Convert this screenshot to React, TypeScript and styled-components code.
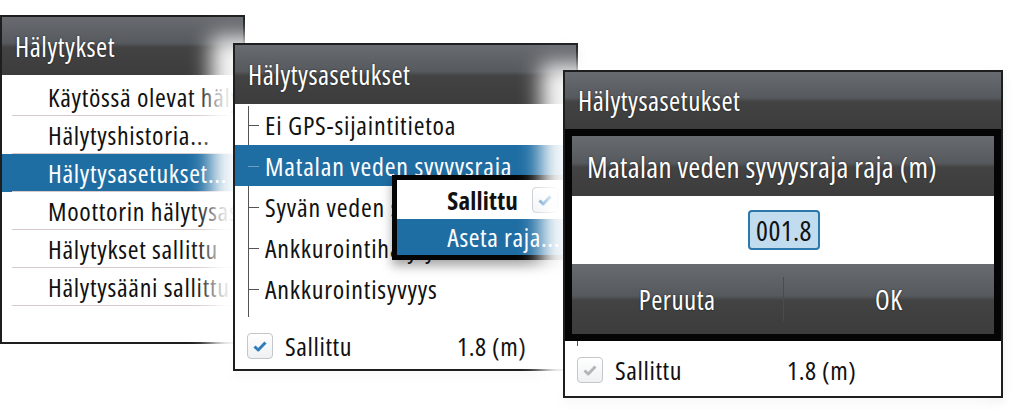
import React from 'react';
import styled, { createGlobalStyle, css } from 'styled-components';

const GlobalStyle = createGlobalStyle`
  html, body {
    margin: 0;
    padding: 0;
    background: #ffffff;
  }
  body {
    font-family: "Open Sans", "Noto Sans", "DejaVu Sans", sans-serif;
    font-stretch: 75%;
    color: #111;
  }
`;

const Desktop = styled.div`
  position: relative;
  width: 1023px;
  height: 420px;
  overflow: hidden;
  background: #ffffff;
`;

const Window = styled.div<{ $left: number; $top: number; $width: number; $height: number; $glow?: boolean }>`
  position: absolute;
  left: ${p => p.$left}px;
  top: ${p => p.$top}px;
  width: ${p => p.$width}px;
  height: ${p => p.$height}px;
  box-sizing: border-box;
  border: 2px solid #1e1e1e;
  background: #ffffff;
  display: flex;
  flex-direction: column;
  ${p => p.$glow && css`
    box-shadow: -16px 0 20px 6px rgba(255, 255, 255, 0.95), 0 4px 10px rgba(0, 0, 0, 0.08);
  `}
`;

const glossBar = css`
  background: linear-gradient(
    to bottom,
    #686b70 0%,
    #56595d 45%,
    #434343 52%,
    #3c3c3c 100%
  );
  color: #ffffff;
  text-shadow: 0 0 2px rgba(0, 0, 0, 0.6);
`;

const TitleBar = styled.div<{ $height: number }>`
  ${glossBar};
  height: ${p => p.$height}px;
  flex: none;
  display: flex;
  align-items: center;
  padding-left: 13px;
  font-size: 27px;
  letter-spacing: 0.5px;
  white-space: nowrap;
`;

const List = styled.div<{ $padTop: number }>`
  display: flex;
  flex-direction: column;
  padding-top: ${p => p.$padTop}px;
`;

const MenuRow = styled.div<{ $selected?: boolean }>`
  height: 38px;
  box-sizing: border-box;
  display: flex;
  align-items: center;
  padding-left: 46px;
  font-size: 26px;
  letter-spacing: 0.7px;
  white-space: nowrap;
  overflow: hidden;
  position: relative;
  background: ${p => (p.$selected ? '#1f6ea3' : 'transparent')};
  color: ${p => (p.$selected ? '#ffffff' : '#111')};
  &::after {
    content: '';
    position: absolute;
    left: 10px;
    right: 0;
    bottom: 0;
    height: 1px;
    background: #d9c9cb;
  }
`;

const TreeList = styled.div`
  position: relative;
  display: flex;
  flex-direction: column;
  &::before {
    content: '';
    position: absolute;
    left: 13px;
    top: 2px;
    height: 211px;
    width: 1px;
    background: #555;
  }
`;

const TreeRow = styled.div<{ $selected?: boolean }>`
  height: 41px;
  display: flex;
  align-items: center;
  padding-left: 30px;
  font-size: 26px;
  letter-spacing: 0.8px;
  white-space: nowrap;
  position: relative;
  background: ${p => (p.$selected ? '#1f6ea3' : 'transparent')};
  color: ${p => (p.$selected ? '#ffffff' : '#111')};
  &::before {
    content: '';
    position: absolute;
    left: 13px;
    top: 50%;
    width: 11px;
    height: 1px;
    background: ${p => (p.$selected ? '#6e9fc2' : '#555')};
  }
`;

const TreeStub = styled.div`
  width: 1px;
  height: 5px;
  margin-left: 12px;
  background: #555;
`;

const StatusRow = styled.div<{ $top: number }>`
  margin-top: ${p => p.$top}px;
  height: 30px;
  display: flex;
  align-items: center;
  padding-left: 12px;
  font-size: 26px;
  letter-spacing: 0.6px;
`;

const StatusLabel = styled.span`
  margin-left: 12px;
  width: 172px;
`;

const Box = styled.div<{ $muted?: boolean }>`
  width: 26px;
  height: 26px;
  box-sizing: border-box;
  border: 1px solid #c3c6ca;
  border-radius: 4px;
  background: linear-gradient(to bottom, #ffffff, #eef0f2);
  display: flex;
  align-items: center;
  justify-content: center;
  flex: none;
  color: ${p => (p.$muted ? '#b5b5b5' : '#2f7dbb')};
`;

const Check: React.FC = () => (
  <svg width="16" height="16" viewBox="0 0 16 16">
    <path d="M2.5 8.5 L6.2 12 L13.5 4.5" fill="none" stroke="currentColor" strokeWidth="3" strokeLinejoin="round" />
  </svg>
);

const Popup = styled.div`
  position: absolute;
  left: 157px;
  top: 130px;
  width: 180px;
  box-sizing: border-box;
  border: 5px solid #050505;
  border-right-width: 8px;
  background: #fff;
  box-shadow: 0 6px 10px rgba(0, 0, 0, 0.35);
  display: flex;
  flex-direction: column;
`;

const PopupRow = styled.div<{ $selected?: boolean }>`
  height: ${p => (p.$selected ? 36 : 39)}px;
  display: flex;
  align-items: center;
  justify-content: flex-end;
  gap: 14px;
  padding-right: ${p => (p.$selected ? 4 : 6)}px;
  font-size: ${p => (p.$selected ? 26 : 25)}px;
  letter-spacing: ${p => (p.$selected ? 0.6 : 0.2)}px;
  white-space: nowrap;
  background: ${p => (p.$selected ? '#1f6ea3' : '#ffffff')};
  color: ${p => (p.$selected ? '#ffffff' : '#111')};
  font-weight: ${p => (p.$selected ? 400 : 700)};
`;

const Frame = styled.div`
  background: #050505;
  padding: 7px;
  flex: none;
`;

const Dialog = styled.div`
  display: flex;
  flex-direction: column;
`;

const DialogTitle = styled.div`
  ${glossBar};
  height: 60px;
  display: flex;
  align-items: center;
  padding-left: 15px;
  font-size: 29px;
  letter-spacing: 0.3px;
  white-space: nowrap;
`;

const DialogBody = styled.div`
  height: 68px;
  background: #fff;
  display: flex;
  align-items: center;
  justify-content: center;
`;

const NumberField = styled.div`
  box-sizing: border-box;
  width: 72px;
  height: 40px;
  margin-left: 2px;
  border: 2px solid #2c78ad;
  border-radius: 4px;
  background: #c2dcef;
  display: flex;
  align-items: center;
  justify-content: center;
  font-size: 28px;
  letter-spacing: 0.4px;
  color: #111;
`;

const ButtonBar = styled.div`
  ${glossBar};
  height: 70px;
  display: grid;
  grid-template-columns: 1fr 1px 1fr;
  align-items: center;
`;

const DialogButton = styled.div`
  text-align: center;
  font-size: 27px;
  letter-spacing: 0.5px;
`;

const Divider = styled.div`
  height: 44px;
  background: #6e3c44;
`;

const App: React.FC = () => {
  const alarms = [
    'Käytössä olevat hälytykset...',
    'Hälytyshistoria...',
    'Hälytysasetukset...',
    'Moottorin hälytysasetukset...',
    'Hälytykset sallittu',
    'Hälytysääni sallittu',
  ];
  const settings = [
    'Ei GPS-sijaintitietoa',
    'Matalan veden syvyysraja',
    'Syvän veden syvyysraja',
    'Ankkurointihälytys',
    'Ankkurointisyvyys',
  ];

  return (
    <>
      <GlobalStyle />
      <Desktop>
        <Window $left={0} $top={15} $width={245} $height={329}>
          <TitleBar $height={58}>Hälytykset</TitleBar>
          <List $padTop={3}>
            {alarms.map((a, i) => (
              <MenuRow key={a} $selected={i === 2}>{a}</MenuRow>
            ))}
          </List>
        </Window>

        <Window $left={233} $top={43} $width={345} $height={328} $glow>
          <TitleBar $height={59}>Hälytysasetukset</TitleBar>
          <TreeList>
            {settings.map((s, i) => (
              <TreeRow key={s} $selected={i === 1}>{s}</TreeRow>
            ))}
          </TreeList>
          <StatusRow $top={22}>
            <Box><Check /></Box>
            <StatusLabel>Sallittu</StatusLabel>
            <span>1.8 (m)</span>
          </StatusRow>
          <Popup>
            <PopupRow>
              Sallittu
              <Box><Check /></Box>
            </PopupRow>
            <PopupRow $selected>Aseta raja...</PopupRow>
          </Popup>
        </Window>

        <Window $left={563} $top={70} $width={440} $height={328} $glow>
          <TitleBar $height={57}>Hälytysasetukset</TitleBar>
          <Frame>
            <Dialog>
              <DialogTitle>Matalan veden syvyysraja raja (m)</DialogTitle>
              <DialogBody>
                <NumberField>001.8</NumberField>
              </DialogBody>
              <ButtonBar>
                <DialogButton>Peruuta</DialogButton>
                <Divider />
                <DialogButton>OK</DialogButton>
              </ButtonBar>
            </Dialog>
          </Frame>
          <TreeStub />
          <StatusRow $top={9}>
            <Box $muted><Check /></Box>
            <StatusLabel>Sallittu</StatusLabel>
            <span>1.8 (m)</span>
          </StatusRow>
        </Window>
      </Desktop>
    </>
  );
};

export default App;
